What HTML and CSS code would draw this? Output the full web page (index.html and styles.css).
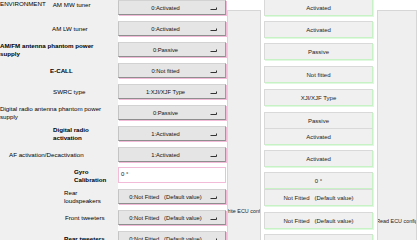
FILE: index.html
```html
<!DOCTYPE html>
<html>
<head>
<meta charset="utf-8">
<link rel="stylesheet" href="styles.css">
</head>
<body>
<div class="screen">
  <div class="form">
    <div class="lbl r1"><span class="env">ENVIRONMENT</span><span class="mw">AM MW tuner</span></div>
    <div class="combo r1"><span class="ctext">0:Activated</span><span class="arrow"><svg width="8" height="4" viewBox="0 0 8 4"><path d="M0.5 3.5H6.5V1.5" fill="none" stroke="#333" stroke-width="1"/></svg></span></div>

    <div class="lbl"><span class="in-52">AM LW tuner</span></div>
    <div class="combo"><span class="ctext">0:Activated</span><span class="arrow"><svg width="8" height="4" viewBox="0 0 8 4"><path d="M0.5 3.5H6.5V1.5" fill="none" stroke="#333" stroke-width="1"/></svg></span></div>

    <div class="lbl"><span class="b wide">AM/FM antenna phantom power supply</span></div>
    <div class="combo"><span class="ctext">0:Passive</span><span class="arrow"><svg width="8" height="4" viewBox="0 0 8 4"><path d="M0.5 3.5H6.5V1.5" fill="none" stroke="#333" stroke-width="1"/></svg></span></div>

    <div class="lbl"><span class="b in-50">E-CALL</span></div>
    <div class="combo"><span class="ctext">0:Not fitted</span><span class="arrow"><svg width="8" height="4" viewBox="0 0 8 4"><path d="M0.5 3.5H6.5V1.5" fill="none" stroke="#333" stroke-width="1"/></svg></span></div>

    <div class="lbl"><span class="in-53">SWRC type</span></div>
    <div class="combo"><span class="ctext">1:XJI/XJF Type</span><span class="arrow"><svg width="8" height="4" viewBox="0 0 8 4"><path d="M0.5 3.5H6.5V1.5" fill="none" stroke="#333" stroke-width="1"/></svg></span></div>

    <div class="lbl"><span class="wide">Digital radio antenna phantom power supply</span></div>
    <div class="combo"><span class="ctext">0:Passive</span><span class="arrow"><svg width="8" height="4" viewBox="0 0 8 4"><path d="M0.5 3.5H6.5V1.5" fill="none" stroke="#333" stroke-width="1"/></svg></span></div>

    <div class="lbl"><span class="b in-53 narrow">Digital radio activation</span></div>
    <div class="combo"><span class="ctext">1:Activated</span><span class="arrow"><svg width="8" height="4" viewBox="0 0 8 4"><path d="M0.5 3.5H6.5V1.5" fill="none" stroke="#333" stroke-width="1"/></svg></span></div>

    <div class="lbl"><span class="in-9">AF activation/Decactivation</span></div>
    <div class="combo"><span class="ctext">1:Activated</span><span class="arrow"><svg width="8" height="4" viewBox="0 0 8 4"><path d="M0.5 3.5H6.5V1.5" fill="none" stroke="#333" stroke-width="1"/></svg></span></div>

    <div class="lbl gyro-row"><span class="b in-74 narrow">Gyro Calibration</span></div>
    <div class="textbox gyro-row">0 °</div>

    <div class="lbl"><span class="in-64 narrow">Rear loudspeakers</span></div>
    <div class="combo"><span class="ctext">0:Not Fitted&nbsp;&nbsp;&nbsp;(Default value)</span><span class="arrow"><svg width="8" height="4" viewBox="0 0 8 4"><path d="M0.5 3.5H6.5V1.5" fill="none" stroke="#333" stroke-width="1"/></svg></span></div>

    <div class="lbl"><span class="in-65">Front tweeters</span></div>
    <div class="combo"><span class="ctext">0:Not Fitted&nbsp;&nbsp;&nbsp;(Default value)</span><span class="arrow"><svg width="8" height="4" viewBox="0 0 8 4"><path d="M0.5 3.5H6.5V1.5" fill="none" stroke="#333" stroke-width="1"/></svg></span></div>

    <div class="lbl"><span class="b in-64">Rear tweeters</span></div>
    <div class="combo"><span class="ctext">0:Not Fitted&nbsp;&nbsp;&nbsp;(Default value)</span><span class="arrow"><svg width="8" height="4" viewBox="0 0 8 4"><path d="M0.5 3.5H6.5V1.5" fill="none" stroke="#333" stroke-width="1"/></svg></span></div>
  </div>

  <div class="btn write"><span>Write ECU config</span></div>

  <div class="values">
    <div class="val first">Activated</div>
    <div class="val">Activated</div>
    <div class="val">Passive</div>
    <div class="val g6">Not fitted</div>
    <div class="val g6">XJI/XJF Type</div>
    <div class="val gneg">Passive</div>
    <div class="val">Activated</div>
    <div class="val">Activated</div>
    <div class="val g0 short">0 °</div>
    <div class="val g6">Not Fitted&nbsp;&nbsp;&nbsp;(Default value)</div>
    <div class="val g6">Not Fitted&nbsp;&nbsp;&nbsp;(Default value)</div>
    <div class="val"></div>
  </div>

  <div class="btn read"><span>Read ECU config</span></div>
</div>
</body>
</html>
```

FILE: styles.css
```css
* { box-sizing: border-box; }
html, body { margin: 0; padding: 0; }
body {
  width: 419px;
  height: 240px;
  overflow: hidden;
  background: #ffffff;
  font-family: "Liberation Sans", Arial, sans-serif;
  color: #000;
}
.screen {
  display: flex;
  align-items: flex-start;
  height: 240px;
  overflow: hidden;
}
.form {
  display: grid;
  grid-template-columns: 118px 109px;
  grid-auto-rows: 15px;
  row-gap: 6px;
  flex: none;
  width: 227px;
  background: linear-gradient(to right, #f0f0f0 0 116px, #ffffff 116px);
  padding-bottom: 20px;
}
.lbl {
  display: flex;
  align-items: center;
  font-size: 6.2px;
  line-height: 7.5px;
  white-space: nowrap;
  background: #f0f0f0;
  margin: -3px 0;
  height: 21px;
}
.lbl.r1 {
  margin-top: -2px;
  align-items: flex-start;
  padding-top: 3px;
}
.lbl span { display: block; }
.env { margin-top: -1px; }
.mw { margin-left: 7px; }
.in-9 { padding-left: 9px; }
.in-50 { padding-left: 50px; }
.in-52 { padding-left: 52px; }
.in-53 { padding-left: 53px; }
.in-64 { padding-left: 64px; }
.in-65 { padding-left: 65px; }
.in-74 { padding-left: 74px; }
.b { font-weight: bold; }
.wide { white-space: normal; width: 108px; }
.narrow { white-space: normal; }
.in-53.narrow { width: 100px; padding-right: 8px; }
.in-74.narrow { width: 112px; }
.in-64.narrow { width: 108px; }

.combo {
  display: flex;
  align-items: center;
  height: 15px;
  background: #e5e5e5;
  border: 1px solid;
  border-color: #d2d2d2 #9c9c9c #8e8e8e #c4c4c4;
  box-shadow: 1px 1px 0 #f2bcd8;
  margin-right: 1px;
  font-size: 5.8px;
  color: #111;
}
.ctext {
  flex: 1;
  text-align: center;
  white-space: nowrap;
  padding-left: 2px;
}
.arrow {
  width: 15px;
  display: flex;
  align-items: center;
  justify-content: flex-start;
  padding-top: 1px;
}
.arrow svg { display: block; }

.gyro-row { height: 16px; margin-top: -1px; }
.lbl.gyro-row { height: 21px; margin-top: -3px; }
.textbox {
  background: #ffffff;
  border: 1px solid #f2bcd8;
  margin-right: 1px;
  font-size: 6px;
  padding: 3px 2px;
  color: #111;
}

.btn {
  flex: none;
  margin-top: 10px;
  background: #efefef;
  border: 1px solid #d6d6d6;
  display: flex;
  align-items: center;
  justify-content: center;
  overflow: hidden;
  font-size: 5.4px;
  white-space: nowrap;
  color: #222;
}
.btn span { flex: none; }
.write { width: 34px; height: 402px; }
.read { width: 40px; height: 422px; margin-left: 4px; }

.values {
  flex: none;
  width: 109px;
  margin-left: 3px;
  display: flex;
  flex-direction: column;
  margin-top: -1px;
}
.val {
  flex: none;
  height: 17px;
  margin-top: 5px;
  background: #f0f0f0;
  border: 1px solid;
  border-color: #d9d9d9 #c6f2c6 #c6f2c6 #d9d9d9;
  box-shadow: 1px 1px 0 #dff8df;
  display: flex;
  align-items: center;
  justify-content: center;
  font-size: 6px;
  white-space: nowrap;
  color: #222;
}
.val.first { margin-top: 0; }
.val.g6 { margin-top: 6px; }
.val.gneg { margin-top: 6px; }
.val.gneg + .val { margin-top: -1px; }
.val.g0 { margin-top: 5px; }
.val.short + .val { margin-top: 0; }
```
